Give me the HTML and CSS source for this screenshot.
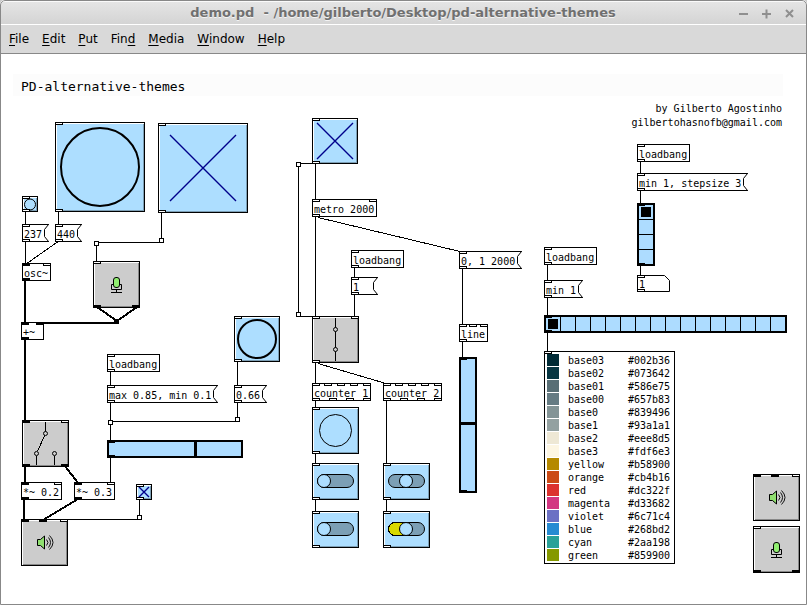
FILE: index.html
```html
<!DOCTYPE html>
<html lang="en">
<head>
<meta charset="utf-8">
<title>demo.pd</title>
<link rel="stylesheet" href="styles.css">
</head>
<body>
<svg class="defs" aria-hidden="true">
  <defs>
    <g id="port"><rect width="8" height="3"/><rect x="1" y="1" width="6" height="1" fill="#fff"/></g>
    <g id="sig"><rect width="8" height="3"/></g>
    <g id="grip"><rect width="5" height="5"/><rect x="1" y="1" width="3" height="3" fill="#fff"/></g>
    <g id="notch-line"><path d="M5.5 .5L1.500 5.500V12.500L5.500 17.500"/></g>
    <g id="mic-icon">
      <rect x="20.500" y="16.500" width="6" height="10" rx="2.500" fill="#90ee70" stroke="#000"/>
      <path d="M20 23.500H18.500V28.500H28.500V23.500H27M23.500 28.500V31.500M18 31.500H29" fill="none" stroke="#000"/>
    </g>
    <g id="speaker-icon">
      <path d="M16.500 20.500H19.500L23.500 17V30L19.500 26.500H16.500Z" fill="#90e070" stroke="#000"/>
      <path d="M25.500 20.500Q28.500 23.500 25.500 26.500M27.500 18.500Q31.500 23.500 27.500 28.500M28.500 16.500Q35.500 23.500 28.500 30.500" fill="none" stroke="#111"/>
    </g>
  </defs>
</svg>
<div class="window">
  <header class="titlebar">
    <h1>demo.pd&nbsp; - /home/gilberto/Desktop/pd-alternative-themes</h1>
    <div class="controls">
      <button aria-label="Minimize"><svg width="11" height="11"><path d="M1 6H10"/></svg></button>
      <button aria-label="Maximize"><svg width="11" height="11"><path d="M1 6H10M5.500 1.500V10.500"/></svg></button>
      <button aria-label="Close"><svg width="11" height="11"><path d="M2 2L9 9M9 2L2 9"/></svg></button>
    </div>
  </header>
  <nav class="menubar">
    <a href="#"><u>F</u>ile</a><a href="#"><u>E</u>dit</a><a href="#"><u>P</u>ut</a><a href="#">Fin<u>d</u></a><a href="#"><u>M</u>edia</a><a href="#"><u>W</u>indow</a><a href="#"><u>H</u>elp</a>
  </nav>
  <main class="patch">
    <h2>PD-alternative-themes</h2>
    <p class="credit">by Gilberto Agostinho<br>gilbertohasnofb@gmail.com</p>

    <button class="node pad tiny bang-a" aria-label="Bang"><svg width="14" height="14"><circle cx="7" cy="7.500" r="5.500"/></svg></button>
    <button class="node pad large bang-b" aria-label="Bang"><svg width="88" height="88"><circle class="thick" cx="44" cy="44" r="39"/></svg></button>
    <label class="node pad large toggle-a"><input type="checkbox" checked aria-label="Toggle"><svg width="88" height="88"><path class="cross" d="M11 11L77 77M77 11L11 77"/></svg></label>
    <button class="node msg msg-237">237<svg class="notch"><use href="#notch-line"/></svg></button>
    <button class="node msg msg-440">440<svg class="notch"><use href="#notch-line"/></svg></button>
    <div class="node obj osc">osc~</div>
    <button class="node pad grey mic-a" aria-label="Microphone"><svg width="45" height="45" viewBox="1 1 45 45"><use href="#mic-icon"/></svg></button>
    <div class="node obj plus">+~</div>
    <button class="node pad medium bang-c" aria-label="Bang"><svg width="44" height="44"><circle class="thick" cx="22" cy="22" r="19"/></svg></button>
    <div class="node obj load-a">loadbang</div>
    <button class="node msg msg-max">max 0.85, min 0.1<svg class="notch"><use href="#notch-line"/></svg></button>
    <button class="node msg msg-66">0.66<svg class="notch"><use href="#notch-line"/></svg></button>
    <input class="node slider hslider" type="range" min="0" max="129" value="85" aria-label="Level">
    <button class="node pad grey gate-a" aria-label="Route"><svg width="45" height="45" viewBox="1 1 45 45"><path d="M23.500 2V11.500M22.500 15.500L15.500 31.500M14.500 35.500V45M32.500 35.500V45"/><circle cx="23.500" cy="13.500" r="2"/><circle cx="14.500" cy="33.500" r="2"/><circle cx="32.500" cy="33.500" r="2"/></svg></button>
    <div class="node obj mul-a">*~ 0.2</div>
    <div class="node obj mul-b">*~ 0.3</div>
    <label class="node pad tiny toggle-b"><input type="checkbox" checked aria-label="Toggle"><svg width="14" height="14"><path class="cross" d="M2 2L12 12M12 2L2 12"/></svg></label>
    <button class="node pad grey speaker-a" aria-label="Speaker"><svg width="45" height="45" viewBox="1 1 45 45"><use href="#speaker-icon"/></svg></button>

    <label class="node pad medium toggle-c"><input type="checkbox" checked aria-label="Toggle"><svg width="44" height="44"><path class="cross" d="M4 4L40 40M40 4L4 40"/></svg></label>
    <div class="node obj metro">metro 2000</div>
    <div class="node obj load-b">loadbang</div>
    <button class="node msg msg-one">1<svg class="notch"><use href="#notch-line"/></svg></button>
    <button class="node msg msg-ramp">0, 1 2000<svg class="notch"><use href="#notch-line"/></svg></button>
    <div class="node obj line">line</div>
    <button class="node pad grey gate-b" aria-label="Gate"><svg width="45" height="45" viewBox="1 1 45 45"><path d="M23.500 2V45"/><circle cx="23.500" cy="13.500" r="2"/><circle cx="23.500" cy="33.500" r="2"/></svg></button>
    <div class="node obj counter-a">counter 1</div>
    <div class="node obj counter-b">counter 2</div>
    <button class="node pad bang-d" aria-label="Bang"><svg width="45" height="45"><circle cx="22.500" cy="22.500" r="16"/></svg></button>
    <label class="node pad switch switch-a"><input type="checkbox" aria-label="Switch"><svg width="45" height="35"><rect class="pill" x="4.500" y="10.500" width="36" height="13" rx="6.500"/><circle class="knob" cx="11" cy="17" r="6.500"/></svg></label>
    <label class="node pad switch switch-b"><input type="checkbox" aria-label="Switch"><svg width="45" height="35"><rect class="pill" x="4.500" y="10.500" width="36" height="13" rx="6.500"/><circle class="knob" cx="11" cy="17" r="6.500"/></svg></label>
    <label class="node pad switch switch-c"><input type="checkbox" aria-label="Switch"><svg width="45" height="35"><rect class="pill" x="4.500" y="10.500" width="36" height="13" rx="6.500"/><circle class="knob" cx="22" cy="17" r="6.500"/></svg></label>
    <label class="node pad switch switch-d"><input type="checkbox" checked aria-label="Switch"><svg width="45" height="35"><rect class="pill" x="4.500" y="10.500" width="36" height="13" rx="6.500"/><path class="lit" d="M22 10.500H11A6.500 6.500 0 0 0 11 23.500H22"/><circle class="knob" cx="22" cy="17" r="6.500"/></svg></label>
    <input class="node slider vslider" type="range" min="0" max="129" value="66" aria-label="Ramp">

    <div class="node obj load-c">loadbang</div>
    <button class="node msg msg-step">min 1, stepsize 3<svg class="notch"><use href="#notch-line"/></svg></button>
    <fieldset class="node radios vradio" aria-label="Step">
      <input type="radio" name="v" checked aria-label="1"><input type="radio" name="v" aria-label="2"><input type="radio" name="v" aria-label="3"><input type="radio" name="v" aria-label="4">
    </fieldset>
    <div class="node number"><svg width="33" height="17"><path d="M.5 .5H27.500L32.500 5.500V16.500H.5Z"/></svg><input type="text" value="1" aria-label="Value"></div>
    <div class="node obj load-d">loadbang</div>
    <button class="node msg msg-min">min 1<svg class="notch"><use href="#notch-line"/></svg></button>
    <fieldset class="node radios hradio" aria-label="Colour index">
      <input type="radio" name="h" checked aria-label="1"><input type="radio" name="h" aria-label="2"><input type="radio" name="h" aria-label="3"><input type="radio" name="h" aria-label="4"><input type="radio" name="h" aria-label="5"><input type="radio" name="h" aria-label="6"><input type="radio" name="h" aria-label="7"><input type="radio" name="h" aria-label="8"><input type="radio" name="h" aria-label="9"><input type="radio" name="h" aria-label="10"><input type="radio" name="h" aria-label="11"><input type="radio" name="h" aria-label="12"><input type="radio" name="h" aria-label="13"><input type="radio" name="h" aria-label="14"><input type="radio" name="h" aria-label="15"><input type="radio" name="h" aria-label="16">
    </fieldset>
    <table class="node palette">
      <tbody>
      <tr><td><i style="background:#002b36"></i></td><td>base03</td><td>#002b36</td></tr>
      <tr><td><i style="background:#073642"></i></td><td>base02</td><td>#073642</td></tr>
      <tr><td><i style="background:#586e75"></i></td><td>base01</td><td>#586e75</td></tr>
      <tr><td><i style="background:#657b83"></i></td><td>base00</td><td>#657b83</td></tr>
      <tr><td><i style="background:#839496"></i></td><td>base0</td><td>#839496</td></tr>
      <tr><td><i style="background:#93a1a1"></i></td><td>base1</td><td>#93a1a1</td></tr>
      <tr><td><i style="background:#eee8d5"></i></td><td>base2</td><td>#eee8d5</td></tr>
      <tr><td><i style="background:#fdf6e3"></i></td><td>base3</td><td>#fdf6e3</td></tr>
      <tr><td><i style="background:#b58900"></i></td><td>yellow</td><td>#b58900</td></tr>
      <tr><td><i style="background:#cb4b16"></i></td><td>orange</td><td>#cb4b16</td></tr>
      <tr><td><i style="background:#dc322f"></i></td><td>red</td><td>#dc322f</td></tr>
      <tr><td><i style="background:#d33682"></i></td><td>magenta</td><td>#d33682</td></tr>
      <tr><td><i style="background:#6c71c4"></i></td><td>violet</td><td>#6c71c4</td></tr>
      <tr><td><i style="background:#268bd2"></i></td><td>blue</td><td>#268bd2</td></tr>
      <tr><td><i style="background:#2aa198"></i></td><td>cyan</td><td>#2aa198</td></tr>
      <tr><td><i style="background:#859900"></i></td><td>green</td><td>#859900</td></tr>
      </tbody>
    </table>
    <button class="node pad grey speaker-b" aria-label="Speaker"><svg width="45" height="45" viewBox="1 1 45 45"><use href="#speaker-icon"/></svg></button>
    <button class="node pad grey mic-b" aria-label="Microphone"><svg width="45" height="45" viewBox="1 1 45 45"><use href="#mic-icon"/></svg></button>

    <svg class="cords" width="800" height="540" viewBox="0 54 800 540" aria-hidden="true">
      <!-- control cords -->
      <path class="cord" d="M25.500 212V224M58.500 212V224M25.500 242V263M57.500 242L27.500 263M161.500 213V238M160 242.500H97M96.500 246V261
        M110.500 372V385M110.500 403V420M113 421.500H237M237.500 362V385M237.500 403V417M110.500 425V440M110.500 458V482M139.500 500V515M68 519.500H137
        M315.500 164V199M298 163.500H312M298.500 167V312M301 316.500H312M315.500 217V316M318 217.500L460 251.500M354.500 268V277M354.500 295V316
        M462.500 269V324M462.500 342V357M315.500 363V383M318 363.500L386 383.500M315.500 401V407M315.500 454V463M315.500 500V511M386.500 401V463M386.500 500V511
        M640.500 162V173M640.500 191V203M640.500 266V275M547.500 265V280M547.500 298V315M547.500 333V351"/>
      <!-- signal cords -->
      <path class="signal" d="M25 281V322M97 307L117 321L137 307M119 323H43M25 340V420M25 467V482M65 466L78 483M24 500V519M78 499L43 520"/>
      <rect x="114" y="319" width="5" height="5"/>
      <use href="#grip" x="159" y="238"/><use href="#grip" x="94" y="241"/><use href="#grip" x="108" y="420"/><use href="#grip" x="235" y="417"/><use href="#grip" x="137" y="515"/><use href="#grip" x="296" y="162"/><use href="#grip" x="296" y="312"/>
      <!-- control inlets and outlets -->
      <use href="#port" x="22" y="196"/><use href="#port" x="22" y="209"/>
      <use href="#port" x="55" y="122"/><use href="#port" x="55" y="209"/>
      <use href="#port" x="158" y="123"/><use href="#port" x="158" y="210"/>
      <use href="#port" x="22" y="224"/><use href="#port" x="22" y="239"/><use href="#port" x="55" y="224"/><use href="#port" x="55" y="239"/>
      <use href="#port" x="43" y="263"/><use href="#port" x="93" y="261"/>
      <use href="#port" x="234" y="316"/><use href="#port" x="234" y="359"/>
      <use href="#port" x="107" y="354"/><use href="#port" x="107" y="369"/><use href="#port" x="107" y="385"/><use href="#port" x="107" y="400"/>
      <use href="#port" x="234" y="385"/><use href="#port" x="234" y="400"/><use href="#port" x="61" y="420"/>
      <use href="#port" x="54" y="482"/><use href="#port" x="107" y="482"/><use href="#port" x="136" y="484"/><use href="#port" x="136" y="497"/><use href="#port" x="60" y="519"/>
      <use href="#port" x="312" y="118"/><use href="#port" x="312" y="161"/><use href="#port" x="312" y="199"/><use href="#port" x="369" y="199"/><use href="#port" x="312" y="214"/>
      <use href="#port" x="351" y="250"/><use href="#port" x="351" y="265"/><use href="#port" x="351" y="277"/><use href="#port" x="351" y="292"/>
      <use href="#port" x="459" y="251"/><use href="#port" x="459" y="266"/>
      <use href="#port" x="459" y="324"/><use href="#port" x="469" y="324"/><use href="#port" x="480" y="324"/><use href="#port" x="459" y="339"/>
      <use href="#port" x="312" y="316"/><use href="#port" x="351" y="316"/><use href="#port" x="312" y="360"/>
      <use href="#port" x="312" y="383"/><use href="#port" x="324" y="383"/><use href="#port" x="337" y="383"/><use href="#port" x="350" y="383"/><use href="#port" x="363" y="383"/>
      <use href="#port" x="312" y="398"/><use href="#port" x="329" y="398"/><use href="#port" x="346" y="398"/><use href="#port" x="363" y="398"/>
      <use href="#port" x="383" y="383"/><use href="#port" x="395" y="383"/><use href="#port" x="408" y="383"/><use href="#port" x="421" y="383"/><use href="#port" x="434" y="383"/>
      <use href="#port" x="383" y="398"/><use href="#port" x="400" y="398"/><use href="#port" x="417" y="398"/><use href="#port" x="434" y="398"/>
      <use href="#port" x="312" y="407"/><use href="#port" x="312" y="451"/>
      <use href="#port" x="312" y="463"/><use href="#port" x="312" y="497"/><use href="#port" x="312" y="511"/><use href="#port" x="312" y="545"/>
      <use href="#port" x="383" y="463"/><use href="#port" x="383" y="497"/><use href="#port" x="383" y="511"/><use href="#port" x="383" y="545"/>
      <use href="#port" x="637" y="144"/><use href="#port" x="637" y="159"/><use href="#port" x="637" y="173"/><use href="#port" x="637" y="188"/>
      <use href="#port" x="637" y="275"/><use href="#port" x="637" y="289"/>
      <use href="#port" x="544" y="247"/><use href="#port" x="544" y="262"/><use href="#port" x="544" y="280"/><use href="#port" x="544" y="295"/><use href="#port" x="544" y="351"/>
      <use href="#port" x="792" y="474"/><use href="#port" x="753" y="526"/>
      <!-- signal inlets and outlets -->
      <use href="#sig" x="22" y="263"/><use href="#sig" x="22" y="278"/><use href="#sig" x="93" y="305"/><use href="#sig" x="132" y="305"/>
      <use href="#sig" x="21" y="322"/><use href="#sig" x="36" y="322"/><use href="#sig" x="21" y="337"/>
      <use href="#sig" x="22" y="420"/><use href="#sig" x="22" y="464"/><use href="#sig" x="61" y="464"/>
      <use href="#sig" x="107" y="440"/><use href="#sig" x="107" y="455"/>
      <use href="#sig" x="21" y="482"/><use href="#sig" x="21" y="497"/><use href="#sig" x="74" y="482"/><use href="#sig" x="74" y="497"/>
      <use href="#sig" x="21" y="519"/><use href="#sig" x="39" y="519"/>
      <use href="#sig" x="459" y="357"/><use href="#sig" x="459" y="490"/>
      <use href="#sig" x="637" y="203"/><use href="#sig" x="637" y="263"/><use href="#sig" x="544" y="315"/><use href="#sig" x="544" y="330"/>
      <use href="#sig" x="753" y="474"/><use href="#sig" x="771" y="474"/><use href="#sig" x="753" y="570"/><use href="#sig" x="792" y="570"/>
    </svg>
  </main>
</div>
</body>
</html>
```
FILE: styles.css
```css
* { box-sizing: border-box; }
body { margin: 0; background: #ccc; }
button, input, fieldset { margin: 0; padding: 0; border: 0; background: none; color: inherit; font: inherit; }
.defs { position: absolute; width: 0; height: 0; }

.window {
  position: relative;
  display: flex;
  flex-direction: column;
  min-height: 100vh;
  background: #fff;
  border-radius: 5px 5px 0 0;
  overflow: hidden;
}
.window::after {
  content: "";
  position: absolute;
  inset: 0;
  border: 1px solid #888;
  border-radius: 5px 5px 0 0;
  pointer-events: none;
}

.titlebar {
  display: grid;
  grid-template-columns: 1fr auto;
  align-items: center;
  height: 25px;
  padding: 2px 12px 0 68px;
  background: linear-gradient(#e6e6e6, #d4d4d4);
  border-bottom: 1px solid #fff;
  box-shadow: inset 0 2px #fafafa;
}
.titlebar h1 {
  margin: 0;
  text-align: center;
  font: bold 13px/20px "DejaVu Sans", sans-serif;
  color: #707070;
  text-shadow: 0 1px #f4f4f4;
}
.controls { display: flex; gap: 12px; }
.controls button { display: flex; }
.controls path { stroke: #8f8f8f; stroke-width: 2; fill: none; }

.menubar {
  display: flex;
  gap: 13px;
  height: 29px;
  padding: 0 9px;
  background: #d9d9d9;
  border-bottom: 1px solid #888;
  font: 12px/28px "DejaVu Sans", sans-serif;
}
.menubar a { color: #000; text-decoration: none; }
.menubar u { text-underline-offset: 2px; }

.patch {
  position: relative;
  flex: 1;
  padding: 20px 24px 0 13px;
  font: 10px/14px "DejaVu Sans Mono", monospace;
  color: #000;
}
.patch h2 {
  margin: 0 0 6px;
  padding: 4px 8px 0;
  background: #fcfcfc;
  font: 13px/18px "DejaVu Sans Mono", monospace;
}
.credit { margin: 0; padding-right: 1px; text-align: right; }

.node { position: absolute; }
.cords { position: absolute; left: 0; top: 0; pointer-events: none; }
.cords, .pad path { shape-rendering: crispEdges; }
.cord { fill: none; stroke: #000; }
.signal { fill: none; stroke: #000; stroke-width: 2; }

.obj, .msg {
  height: 18px;
  padding: 4px 2px 0 1px;
  border: 1px solid #000;
  background: #fff;
  line-height: 12px;
  white-space: pre;
  text-align: left;
}
.msg { border-right: 0; padding-right: 7px; }
.notch { position: absolute; right: 0; top: -1px; width: 6px; height: 18px; background: #fff; fill: #fff; stroke: #000; }
.msg .notch { background: linear-gradient(#000, #000) top / 100% 1px no-repeat, linear-gradient(#000, #000) bottom / 100% 1px no-repeat, #fff; }

.pad {
  display: grid;
  width: 47px;
  height: 47px;
  border: 1px solid #000;
  background: #addeff;
  box-shadow: inset 1px 1px #fff, inset -1px -1px #7d9fb5;
}
.pad.grey { background: #ccc; box-shadow: inset 1px 1px #fff, inset -1px -1px #888; }
.pad.tiny { width: 16px; height: 16px; }
.pad.medium { width: 46px; height: 46px; }
.pad.large { width: 90px; height: 90px; }
.pad.switch { height: 37px; }
.pad input { appearance: none; }
.pad > * { grid-area: 1 / 1; }
.pad svg { display: block; fill: none; stroke: #000; }
.pad.grey circle { fill: #ccc; }
.pad .thick { stroke-width: 2; }
.pad .cross { stroke: #00008b; stroke-width: 1.4; shape-rendering: auto; }
.pill { fill: #7c9fb5; }
.knob { fill: #addeff; }
.lit { fill: #d9d900; }

.slider { appearance: none; border: 2px solid #000; background: #addcff; }
.slider::-webkit-slider-thumb { appearance: none; border: 0; border-radius: 0; background: #000; }
.hslider { width: 136px; height: 18px; }
.hslider::-webkit-slider-thumb { width: 3px; height: 14px; }
.vslider { width: 18px; height: 136px; writing-mode: vertical-lr; direction: rtl; }
.vslider::-webkit-slider-thumb { width: 14px; height: 3px; }

.radios { display: flex; gap: 1px; min-width: 0; border: 2px solid #000; background: #000; }
.radios input { appearance: none; width: 14px; height: 14px; background: #addcff; }
.radios input:checked { border: 2px solid #addcff; background: #000; }
.vradio { flex-direction: column; }

.number { display: grid; width: 33px; height: 17px; }
.number > * { grid-area: 1 / 1; }
.number svg { fill: #fff; stroke: #000; }
.number input { width: 26px; padding: 4px 0 1px 2px; line-height: 12px; }

.palette { border: 1px solid #000; border-spacing: 0; padding: 2px 3px 1px 2px; background: #fff; line-height: 12px; }
.palette td { height: 13px; padding: 1px 0 0; vertical-align: top; }
.palette td:nth-child(1) { width: 21px; padding: 0; }
.palette td:nth-child(2) { width: 60px; }
.palette td:nth-child(3) { width: 43px; }
.palette i { display: block; width: 12px; height: 12px; }

/* places on the patch canvas */
.bang-a { left: 22px; top: 142px; }
.bang-b { left: 55px; top: 68px; }
.toggle-a { left: 158px; top: 69px; }
.msg-237 { left: 22px; top: 170px; }
.msg-440 { left: 55px; top: 170px; }
.osc { left: 22px; top: 209px; }
.mic-a { left: 93px; top: 207px; }
.plus { left: 21px; top: 268px; width: 23px; }
.bang-c { left: 234px; top: 262px; }
.load-a { left: 107px; top: 300px; }
.msg-max { left: 107px; top: 331px; }
.msg-66 { left: 234px; top: 331px; }
.hslider { left: 107px; top: 386px; }
.gate-a { left: 22px; top: 366px; }
.mul-a { left: 21px; top: 428px; }
.mul-b { left: 74px; top: 428px; }
.toggle-b { left: 136px; top: 430px; }
.speaker-a { left: 21px; top: 465px; }
.toggle-c { left: 312px; top: 64px; }
.metro { left: 312px; top: 145px; }
.load-b { left: 351px; top: 196px; }
.msg-one { left: 351px; top: 223px; width: 27px; }
.msg-ramp { left: 459px; top: 197px; }
.line { left: 459px; top: 270px; }
.gate-b { left: 312px; top: 262px; }
.counter-a { left: 312px; top: 329px; }
.counter-b { left: 383px; top: 329px; }
.bang-d { left: 312px; top: 353px; }
.switch-a { left: 312px; top: 409px; }
.switch-b { left: 312px; top: 457px; }
.switch-c { left: 383px; top: 409px; }
.switch-d { left: 383px; top: 457px; }
.vslider { left: 459px; top: 303px; }
.load-c { left: 637px; top: 90px; }
.msg-step { left: 637px; top: 119px; }
.vradio { left: 637px; top: 149px; }
.number { left: 637px; top: 221px; }
.load-d { left: 544px; top: 193px; }
.msg-min { left: 544px; top: 226px; }
.hradio { left: 544px; top: 261px; }
.palette { left: 544px; top: 297px; }
.speaker-b { left: 753px; top: 420px; }
.mic-b { left: 753px; top: 472px; }
```
